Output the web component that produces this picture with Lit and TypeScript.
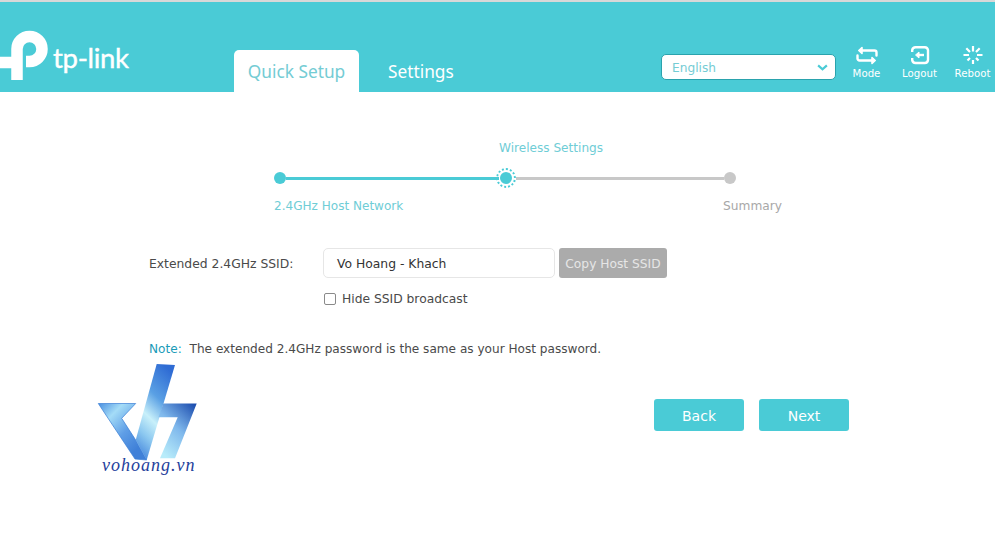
import { LitElement, html, css, svg } from "lit";
import { customElement } from "lit/decorators.js";

const logo = svg`<svg class="logo-mark" viewBox="0 0 50 50" width="50" height="50"><path d="M17 50V19A12.5 12.5 0 1 1 29.500 31.500H26M0 32.500H17" fill="none" stroke="#fff" stroke-width="11.500"/></svg>`;
const modeIcon = svg`<svg viewBox="0 0 22 20" width="22" height="20" fill="none" stroke="#fff" stroke-width="2.400" stroke-linecap="round"><path d="M5 5.500H18.500A2 2 0 0 1 20.500 7.500V10.500"/><path d="M17 15.500H3.500A2 2 0 0 1 1.500 13.500V10.500"/><path d="M6 2.500L2.800 5.500L6 8.500Z" fill="#fff" stroke-width="1.600" stroke-linejoin="round"/><path d="M16 12.500L19.200 15.500L16 18.500Z" fill="#fff" stroke-width="1.600" stroke-linejoin="round"/></svg>`;
const logoutIcon = svg`<svg viewBox="0 0 20 20" width="20" height="20" fill="none" stroke="#fff" stroke-width="2.400"><path d="M2.200 7V5A3.500 3.500 0 0 1 5.700 2.200H14.800A3.500 3.500 0 0 1 18 5V15A3.500 3.500 0 0 1 14.800 18H5.700A3.500 3.500 0 0 1 2.200 15V13"/><path d="M9 10H14"/><path d="M9 7L5.500 10L9 13Z" fill="#fff" stroke-width="1"/></svg>`;
const rebootIcon = svg`<svg viewBox="0 0 22 20" width="22" height="20" fill="none" stroke="#fff" stroke-width="2.200"><path d="M11 1V6.500M11 15V19M1.500 10H7M15 10H20.500M4.300 3.300L8 7M17.700 3.300L14 7M5.500 15.500L8 13M16.500 15.500L14 13"/></svg>`;
const watermark = svg`<svg class="wm-art" viewBox="0 0 125 110" width="125" height="110">
  <defs>
    <linearGradient id="wa" x1="0" y1="0" x2="0.750" y2="0.850"><stop offset="0" stop-color="#4a8fe0"/><stop offset="0.300" stop-color="#a4dcf7"/><stop offset="0.650" stop-color="#5f9ee6"/><stop offset="1" stop-color="#3f80d8"/></linearGradient>
    <linearGradient id="ws" x1="0.700" y1="0" x2="0.300" y2="1"><stop offset="0" stop-color="#2f6cd4"/><stop offset="0.350" stop-color="#5aa0e4"/><stop offset="0.600" stop-color="#c8f0fa"/><stop offset="0.800" stop-color="#8cc8f0"/><stop offset="1" stop-color="#4f90e0"/></linearGradient>
    <linearGradient id="wb" x1="0.250" y1="1" x2="0.900" y2="0"><stop offset="0" stop-color="#b8ecfa"/><stop offset="0.500" stop-color="#7fb8ec"/><stop offset="1" stop-color="#1f50b0"/></linearGradient>
  </defs>
  <path d="M13.300 48.500H50.700L36.700 63.300L50.700 85L61.700 105L50 104Z" fill="url(#wa)" stroke="#3a7ed6" stroke-width="0.700"/>
  <path d="M71.700 9L90 10L61.700 105L50.700 85Z" fill="url(#ws)"/>
  <path d="M78.300 48.500H111.700L90 103.300H75L92.700 62.300H73.500Z" fill="url(#wb)"/>
</svg>`;

@customElement("app-root")
export class AppRoot extends LitElement {
  static styles = css`
    :host { display: block; position: relative; width: 995px; height: 543px; background: #fff; overflow: hidden; font-family: "DejaVu Sans", Verdana, sans-serif; font-size: 12.200px; color: #4a4a4a; }
    .header { box-sizing: border-box; height: 92px; background: #4acbd6; border-top: 2px solid #d8d8d8; display: flex; align-items: flex-end; }
    .header > * { flex: none; }
    .brand { width: 234px; display: flex; align-items: flex-end; height: 50px; padding-bottom: 12px; box-sizing: border-box; position: relative; }
    .logo-mark { position: absolute; left: 0; bottom: 12px; }
    .brand-name { margin-left: 53px; margin-bottom: 7px; color: #fff; font-family: "Lato", sans-serif; font-size: 27.500px; letter-spacing: -0.300px; -webkit-text-stroke: 0.400px #fff; line-height: 30px; }
    .tabs { display: flex; width: 427px; height: 42px; }
    .tab { box-sizing: border-box; height: 42px; line-height: 43px; font-size: 17.300px; color: #fff; font-family: "Noto Sans", sans-serif; }
    .tab.active { width: 125px; background: #fff; color: #74ccd4; border-radius: 5px 5px 0 0; text-align: center; }
    .tab.other { margin-left: 29px; }
    .lang { box-sizing: border-box; width: 175px; height: 26px; margin-bottom: 12px; background: #fff; border: 1px solid #2aa3ad; border-radius: 5px; display: flex; align-items: center; justify-content: space-between; padding: 1px 7px 0 10px; color: #74ccd4; font-size: 12.200px; }
    .actions { display: flex; margin-left: 4px; align-items: flex-end; }
    .action { display: flex; flex-direction: column; align-items: center; width: 53px; padding-bottom: 12px; color: #fff; font-size: 10.200px; gap: 3px; line-height: 12px; }
    .stepper { margin: 46px 0 0 274px; width: 508px; display: grid; grid-template-columns: 225px 237px 46px; grid-template-rows: 28px 24px 24px; }
    .top-label { grid-column: 2; grid-row: 1; color: #6fcdd6; white-space: nowrap; line-height: 20px; font-size: 12.100px; }
    .track, .track2 { grid-row: 2; display: flex; align-items: center; }
    .track { grid-column: 1; }
    .track2 { grid-column: 2; }
    .dot { width: 12px; height: 12px; border-radius: 50%; background: #4acbd6; flex: none; }
    .dot.gray { background: #c8c8c8; }
    .line { height: 3px; flex: 1; background: #4acbd6; }
    .line.gray { background: #c8c8c8; }
    .ring { width: 20px; height: 20px; flex: none; margin-left: -3px; box-sizing: border-box; border: 2px dotted #4acbd6; border-radius: 50%; display: flex; align-items: center; justify-content: center; }
    .step-label { grid-row: 3; white-space: nowrap; line-height: 16px; align-self: end; }
    .step-label.done { grid-column: 1 / 3; color: #6fcdd6; font-size: 12.050px; }
    .step-label.todo { grid-column: 2 / 4; color: #a8a8a8; justify-self: end; }
    .form { margin: 34px 0 0 149px; display: grid; grid-template-columns: 174px 232px auto; align-items: center; }
    .name { font-size: 12.350px; padding-top: 2px; }
    .input { box-sizing: border-box; height: 30px; border: 1px solid #e6e6e6; border-radius: 5px; padding: 0 13px; line-height: 30px; color: #333; font-size: 12.350px; }
    .copy { box-sizing: border-box; margin-left: 4px; width: 108px; height: 30px; border-radius: 3px; background: #ababab; color: #e6e6e6; line-height: 32px; text-align: center; white-space: nowrap; font-size: 12.250px; }
    .hide { grid-column: 2 / 4; margin-top: 13px; display: flex; align-items: center; gap: 6px; height: 16px; padding-left: 1px; font-size: 12.300px; }
    .box { box-sizing: border-box; width: 12px; height: 12px; border: 1px solid #8a8a8a; border-radius: 2px; background: #fff; }
    .note { margin: 34px 0 0 149px; line-height: 16px; font-size: 12.100px; }
    .note b { font-weight: 400; color: #1a9bb8; margin-right: 4px; }
    .buttons { margin: 42px 0 0 654px; display: flex; gap: 15px; }
    .btn { box-sizing: border-box; width: 90px; height: 32px; background: #4acbd6; border-radius: 3px; color: #fff; font-size: 14px; line-height: 34px; text-align: center; }
    .wm { position: absolute; left: 85px; top: 355px; width: 125px; height: 125px; }
    .wm-art { display: block; }
    .wm-text { position: absolute; left: 17px; top: 100px; font-family: "Liberation Serif", serif; font-style: italic; font-size: 18px; line-height: 20px; color: #1f3f9c; letter-spacing: 1px; white-space: nowrap; }
  `;

  render() {
    return html`
      <div class="header">
        <div class="brand">${logo}<span class="brand-name">tp-link</span></div>
        <div class="tabs"><div class="tab active">Quick Setup</div><div class="tab other">Settings</div></div>
        <div class="lang"><span>English</span>
          <svg viewBox="0 0 12 8" width="11" height="7" fill="none" stroke="#4acbd6" stroke-width="2.500"><path d="M1 1.500L6 6L11 1.500"/></svg>
        </div>
        <div class="actions">
          <div class="action">${modeIcon}<span>Mode</span></div>
          <div class="action">${logoutIcon}<span>Logout</span></div>
          <div class="action">${rebootIcon}<span>Reboot</span></div>
        </div>
      </div>
      <div class="stepper">
        <div class="top-label">Wireless Settings</div>
        <div class="track"><span class="dot"></span><span class="line"></span></div>
        <div class="track2"><span class="ring"><span class="dot"></span></span><span class="line gray"></span><span class="dot gray"></span></div>
        <div class="step-label done">2.4GHz Host Network</div>
        <div class="step-label todo">Summary</div>
      </div>
      <div class="form">
        <label class="name">Extended 2.4GHz SSID:</label>
        <div class="input">Vo Hoang - Khach</div>
        <div class="copy">Copy Host SSID</div>
        <div class="hide"><span class="box"></span>Hide SSID broadcast</div>
      </div>
      <div class="note"><b>Note:</b> The extended 2.4GHz password is the same as your Host password.</div>
      <div class="buttons"><div class="btn">Back</div><div class="btn">Next</div></div>
      <div class="wm">${watermark}<div class="wm-text">vohoang.vn</div></div>
    `;
  }
}
